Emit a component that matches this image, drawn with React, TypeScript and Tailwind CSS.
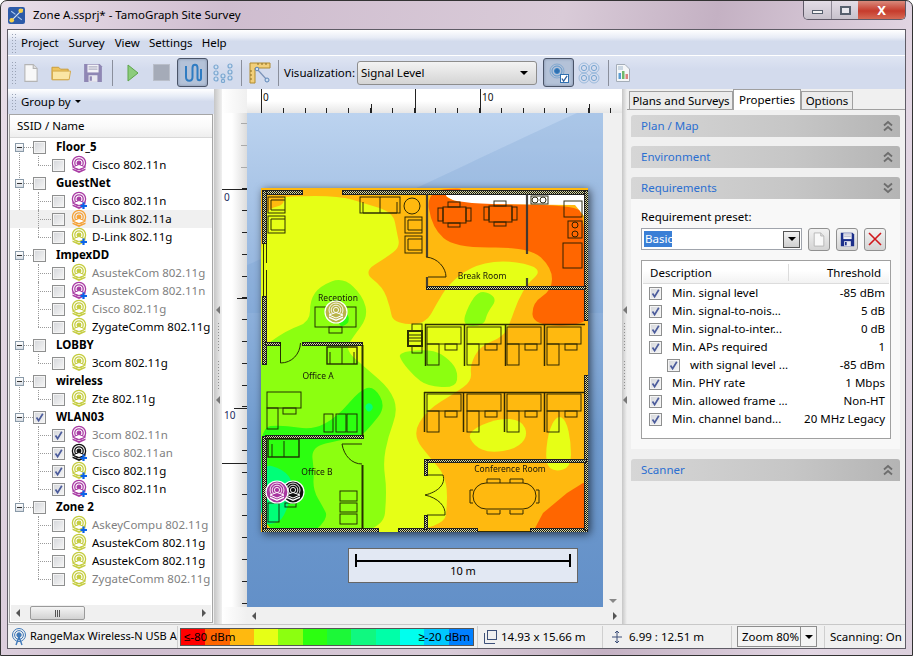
import React from "react";

const UI = "font-['Noto_Sans',sans-serif]";

// smooth closed path through a list of points (midpoint quadratics)
function blob(pts: number[][]) {
  const n = pts.length;
  const mid = (a: number[], b: number[]) => [(a[0] + b[0]) / 2, (a[1] + b[1]) / 2];
  const s = mid(pts[n - 1], pts[0]);
  let d = `M${s[0]} ${s[1]}`;
  for (let i = 0; i < n; i++) {
    const m = mid(pts[i], pts[(i + 1) % n]);
    d += ` Q${pts[i][0]} ${pts[i][1]} ${m[0]} ${m[1]}`;
  }
  return d + "Z";
}

function Box({ checked }: { checked?: boolean }) {
  return (
    <span className="relative block w-[13px] h-[13px] shrink-0 border border-[#8e8f8f] bg-[linear-gradient(135deg,#d4d6da,#f6f6f6)] shadow-[inset_0_0_0_1px_#f4f4f4]">
      {checked && (
        <svg viewBox="0 0 11 11" className="absolute inset-0 w-[11px] h-[11px]">
          <path d="M2.5 5.5 L4.6 8.6 L8.8 1.8" fill="none" stroke="#4c5c9c" strokeWidth="1.7" />
        </svg>
      )}
    </span>
  );
}

function ApIcon({ color, plus }: { color: string; plus?: boolean }) {
  return (
    <svg viewBox="0 0 16 18" className="block w-[16px] h-[18px] shrink-0 overflow-visible">
      <g fill="none" stroke={color} strokeWidth="1.3">
        <circle cx="8" cy="7" r="6.6" />
        <circle cx="8" cy="7" r="4.2" />
        <circle cx="8" cy="7" r="1.8" fill={color} />
      </g>
      <path d="M1.5 11 L8 8.5 L14.5 11 L8 13.5Z" fill="#fff" stroke={color} />
      <path d="M1.5 12.5 L8 15 L14.5 12.5 V14 L8 17 L1.5 14Z" fill={color} />
      {plus && <path d="M12.5 10.5 V17 M9.5 14 H16" stroke="#0b63e8" strokeWidth="2.2" />}
    </svg>
  );
}

type Child = { text: string; color: string; plus?: boolean; dim?: boolean; checked?: boolean; hot?: boolean };
const M = "#a93ba4";
const O = "#f5a136";
const Y = "#c4cc3e";
const K = "#111111";

const tree: { name: string; checked?: boolean; kids: Child[] }[] = [
  { name: "Floor_5", kids: [{ text: "Cisco 802.11n", color: M }] },
  {
    name: "GuestNet",
    kids: [
      { text: "Cisco 802.11n", color: M, plus: true },
      { text: "D-Link 802.11a", color: O, hot: true },
      { text: "D-Link 802.11g", color: Y, plus: true },
    ],
  },
  {
    name: "ImpexDD",
    kids: [
      { text: "AsustekCom 802.11g", color: Y, dim: true },
      { text: "AsustekCom 802.11n", color: M, plus: true, dim: true },
      { text: "Cisco 802.11g", color: Y, dim: true },
      { text: "ZygateComm 802.11g", color: Y },
    ],
  },
  { name: "LOBBY", kids: [{ text: "3com 802.11g", color: Y }] },
  { name: "wireless", kids: [{ text: "Zte 802.11g", color: Y }] },
  {
    name: "WLAN03",
    checked: true,
    kids: [
      { text: "3com 802.11n", color: M, dim: true, checked: true },
      { text: "Cisco 802.11an", color: K, plus: true, dim: true, checked: true },
      { text: "Cisco 802.11g", color: Y, plus: true, checked: true },
      { text: "Cisco 802.11n", color: M, plus: true, checked: true },
    ],
  },
  {
    name: "Zone 2",
    kids: [
      { text: "AskeyCompu 802.11g", color: Y, plus: true, dim: true },
      { text: "AsustekCom 802.11g", color: Y },
      { text: "AsustekCom 802.11g", color: Y },
      { text: "ZygateComm 802.11g", color: Y, dim: true },
    ],
  },
];

function Tree() {
  return (
    <div className="relative flex-1 bg-white overflow-hidden pl-[5px]">
      <span className="absolute left-[9px] top-[9px] h-[361px] border-l border-dotted border-[#9a9a9a]" />
      {tree.map((g) => (
        <div key={g.name}>
          <div className="relative h-[18px] flex items-center">
            <span className="relative z-10 w-[9px] h-[9px] border border-[#8a9aa8] bg-[linear-gradient(#fff,#d8dde4)] flex items-center justify-center">
              <span className="w-[5px] h-px bg-[#333]" />
            </span>
            <span className="w-[9px] border-t border-dotted border-[#9a9a9a]" />
            <Box checked={g.checked} />
            <span className="ml-[10px] text-[11.5px] font-bold text-black">{g.name}</span>
          </div>
          {g.kids.map((c, i) => (
            <div
              key={i}
              className={`relative h-[18px] flex items-center -ml-[5px] pl-[28px] ${c.hot ? "bg-[#f0f0f0]" : ""}`}
            >
              <span className="relative w-[14px] self-stretch shrink-0">
                <span
                  className={`absolute left-0 top-0 border-l border-dotted border-[#9a9a9a] ${
                    i === g.kids.length - 1 ? "h-[9px]" : "h-[18px]"
                  }`}
                />
                <span className="absolute left-0 top-[9px] w-[13px] border-t border-dotted border-[#9a9a9a]" />
              </span>
              <Box checked={c.checked} />
              <span className="ml-[6px]">
                <ApIcon color={c.color} plus={c.plus} />
              </span>
              <span className={`ml-[5px] whitespace-nowrap text-[11.5px] ${c.dim ? "text-[#7f7f7f]" : "text-black"}`}>
                {c.text}
              </span>
            </div>
          ))}
        </div>
      ))}
    </div>
  );
}

function HScroll({ className, thumb }: { className?: string; thumb?: boolean }) {
  return (
    <div className={`h-[16px] flex items-center bg-[#f0f0f0] ${className ?? ""}`}>
      <span className="ml-[5px] w-0 h-0 border-y-[4px] border-y-transparent border-r-[4px] border-r-[#555]" />
      {thumb && (
        <span className="ml-[10px] w-[55px] h-[14px] rounded-[2px] border border-[#9a9a9a] bg-[linear-gradient(#f4f4f4,#d2d2d2)] flex items-center justify-center gap-px">
          <span className="w-px h-[7px] bg-[#555]" />
          <span className="w-px h-[7px] bg-[#555]" />
          <span className="w-px h-[7px] bg-[#555]" />
        </span>
      )}
      <span className="flex-1" />
      <span className="mr-[5px] w-0 h-0 border-y-[4px] border-y-transparent border-l-[4px] border-l-[#555]" />
    </div>
  );
}

function TopRuler() {
  const ticks: [number, number][] = [];
  for (let i = 0; i < 17; i++) ticks.push([14 + 21.8 * i, 5]);
  return (
    <svg viewBox="0 0 375 24" className="block w-[375px] h-[24px] shrink-0">
      <defs>
        <linearGradient id="rt" x1="0" y1="0" x2="0" y2="1">
          <stop offset="0" stopColor="#ffffff" />
          <stop offset="0.5" stopColor="#ffffff" />
          <stop offset="1" stopColor="#e6e6e6" />
        </linearGradient>
      </defs>
      <rect width="375" height="24" fill="url(#rt)" />
      {ticks.map(([x, h], i) => (
        <line key={i} x1={Math.round(x) + 0.5} x2={Math.round(x) + 0.5} y1={24 - h} y2="24" stroke="#222" />
      ))}
      <path d="M14.5 0V24 M233.5 0V24 M168.5 0V24" stroke="#222" />
      <path d="M124.5 15V24 M342.5 15V24" stroke="#222" />
      <text x="16" y="12" fontSize="10" fill="#111" fontFamily="Noto Sans">0</text>
      <text x="235" y="12" fontSize="10" fill="#111" fontFamily="Noto Sans">10</text>
    </svg>
  );
}

function LeftRuler() {
  const ys: number[] = [];
  for (let i = 0; i < 23; i++) ys.push(10 + 21.8 * i);
  return (
    <svg viewBox="0 0 25 494" className="block w-[25px] h-[494px] shrink-0">
      <defs>
        <linearGradient id="rl" x1="0" y1="0" x2="1" y2="0">
          <stop offset="0" stopColor="#ffffff" />
          <stop offset="0.4" stopColor="#ffffff" />
          <stop offset="1" stopColor="#dcdcdc" />
        </linearGradient>
      </defs>
      <rect width="25" height="494" fill="url(#rl)" />
      {ys.map((y, i) => (
        <line
          key={i}
          x1={i < 3 ? 19 : 20}
          x2="25"
          y1={Math.round(y) + 0.5}
          y2={Math.round(y) + 0.5}
          stroke={i < 3 ? "#aaa" : "#222"}
        />
      ))}
      <path d="M0 76.5H25 M0 350.5H25 M15 185.5H25" stroke="#222" />
      <path d="M12 295.5H25" stroke="#222" />
      <text x="2" y="88" fontSize="10" fill="#1a2a60" fontFamily="Noto Sans">0</text>
      <text x="2" y="306" fontSize="10" fill="#1a2a60" fontFamily="Noto Sans">10</text>
    </svg>
  );
}

const YEL = "#e6ff16";
const ORG = "#ffb90f";
const DRK = "#ff6600";
const LIM = "#8cff10";
const GRN = "#2cff10";
const MNT = "#00ff78";

function Sensor({ x, y, color }: { x: number; y: number; color: string }) {
  return (
    <g transform={`translate(${x} ${y})`}>
      <circle r="11" fill={color} stroke="#fff" strokeWidth="1.2" />
      <g fill="none" stroke="#fff" strokeWidth="0.9">
        <circle cy="-2" r="7" />
        <circle cy="-2" r="4.8" />
        <circle cy="-2" r="2.6" />
      </g>
      <path d="M-7 3 L0 0.5 L7 3 L0 6Z" fill={color} stroke="#fff" />
      <path d="M-7 4.5 L0 7.5 L7 4.5 V6 L0 9 L-7 6Z" fill="#fff" />
    </g>
  );
}

function Desk({ x, y }: { x: number; y: number }) {
  return (
    <g>
      <rect x={x} y={y} width="34" height="17" />
      <rect x={x} y={y + 17} width="12" height="21" />
      <rect x={x + 18} y={y + 17} width="12" height="6" />
    </g>
  );
}

function BreakTable({ x, y }: { x: number; y: number }) {
  return (
    <g>
      <rect x={x} y={y} width="23" height="16" />
      <rect x={x + 5} y={y - 5} width="12" height="5" />
      <rect x={x + 5} y={y + 16} width="12" height="4" />
      <rect x={x - 5} y={y + 1} width="5" height="13" />
      <rect x={x + 23} y={y + 1} width="5" height="13" />
    </g>
  );
}

function Chair({ x, y, w, h }: { x: number; y: number; w: number; h: number }) {
  return (
    <g>
      <rect x={x} y={y} width={w} height={h} />
      <path d={`M${x + 3} ${y + h - 3} V${y + 3} H${x + w} M${x + 3} ${y + h - 3} H${x + w}`} />
    </g>
  );
}

function FloorPlan() {
  return (
    <svg
      viewBox="261 188 327 344"
      className="block w-[327px] h-[344px] shrink-0 drop-shadow-[2px_2px_4px_rgba(0,0,0,0.65)]"
      shapeRendering="crispEdges"
    >
      <defs>
        <pattern id="hatch" width="2" height="2" patternUnits="userSpaceOnUse">
          <rect width="2" height="2" fill="#d8d8a0" />
          <rect width="1" height="1" fill="#111" />
          <rect x="1" y="1" width="1" height="1" fill="#111" />
        </pattern>
      </defs>
      <rect x="261" y="188" width="327" height="344" fill={ORG} />
      <g shapeRendering="geometricPrecision">
        <path d="M440 193 H584 V216 L575 205 L460 204Z" fill="#fff" />
        <path
          d={blob([
            [426, 190], [470, 188], [440, 194], [460, 204], [575, 205], [584, 216], [590, 300], [590, 325],
            [533, 326], [532, 303], [552, 290], [552, 268], [530, 247], [455, 248], [432, 228],
          ])}
          fill={DRK}
        />
        <path d="M533 532 L543 513 L567 493 L583 483 L588 483 V532Z" fill={DRK} />
        <path
          d={blob([
            [258, 200], [290, 196], [340, 196], [363, 203], [393, 212], [397, 233], [400, 247], [387, 257],
            [363, 272], [383, 287], [390, 307], [393, 323], [425, 325], [437, 303], [448, 285], [470, 267],
            [500, 260], [533, 265], [540, 273], [528, 283], [518, 300], [510, 323], [503, 337], [480, 346],
            [470, 365], [472, 381], [455, 393], [427, 410], [412, 435], [432, 460], [444, 474], [448, 495],
            [444, 534], [258, 534],
          ])}
          fill={YEL}
        />
        <path d={blob([[262, 194], [284, 194], [284, 205], [270, 208], [264, 216]])} fill={ORG} />
        <path d={blob([[467, 432], [497, 418], [522, 420], [528, 436], [516, 449], [490, 453], [474, 446]])} fill={YEL} />
        <path d={blob([[548, 432], [557, 415], [566, 420], [571, 442], [571, 467], [555, 472], [545, 464]])} fill={YEL} />
        <path
          d={blob([
            [256, 352], [287, 330], [310, 322], [310, 300], [320, 286], [343, 277], [363, 296], [368, 317],
            [353, 337], [345, 350], [367, 369], [390, 389], [398, 410], [388, 437], [383, 463], [387, 490],
            [383, 536], [256, 536],
          ])}
          fill={LIM}
        />
        <path d={blob([[398, 352], [433, 349], [450, 360], [458, 372], [456, 388], [427, 386], [414, 376], [402, 362]])} fill={LIM} />
        <path d={blob([[480, 289], [498, 298], [487, 313], [484, 326], [462, 326], [468, 306]])} fill={LIM} />
        <path d={blob([[338, 317], [347, 312], [350, 322], [340, 328]])} fill={GRN} />
        <path
          d={blob([
            [258, 427], [283, 425], [313, 430], [337, 417], [360, 390], [374, 386], [386, 407], [370, 427],
            [360, 437], [340, 440], [311, 447], [314, 470], [313, 490], [323, 507], [328, 517], [313, 534], [258, 534],
          ])}
          fill={GRN}
        />
        <path d={blob([[260, 463], [283, 469], [294, 483], [288, 507], [280, 523], [260, 525]])} fill={MNT} />
        <path d={blob([[369, 402], [374, 407], [369, 413], [364, 407]])} fill={MNT} />
      </g>

      {/* hatched walls */}
      <g fill="url(#hatch)" stroke="#222" strokeWidth="1">
        <rect x="262" y="190" width="40" height="4" />
        <rect x="342" y="190" width="245" height="4" />
        <rect x="262" y="190" width="4" height="53" />
        <rect x="262" y="296" width="4" height="68" />
        <rect x="262" y="436" width="4" height="95" />
        <rect x="584" y="190" width="4" height="130" />
        <rect x="262" y="528" width="116" height="4" />
        <rect x="398" y="528" width="79" height="4" />
        <rect x="530" y="528" width="58" height="4" />
        <rect x="584" y="375" width="4" height="155" />
        <rect x="265" y="342" width="15" height="3" />
        <rect x="302" y="342" width="60" height="3" />
        <rect x="265" y="435" width="98" height="3" />
        <rect x="426" y="286" width="159" height="3" />
        <rect x="424" y="459" width="162" height="3" />
        <rect x="424" y="459" width="3" height="16" />
        <rect x="424" y="515" width="3" height="14" />
      </g>

      <g fill="none" stroke="#1a1a00" strokeWidth="1" shapeRendering="geometricPrecision" opacity="0.9">
        <path d="M427 194 V257 M427 277 V287 M527 194 V254 M527 278 V287" strokeWidth="2.2" stroke="#333" />
        <path d="M263.5 243 V296 M266.5 243 V263 M266.5 270 V296" />
        <path d="M477 531.5 H530" />
        <path d="M362.5 345 V436 M362.5 465 V529" strokeWidth="2" />
        <path d="M280.5 342 V363 C292 363 300 354 300.5 343" />
        <path d="M342 444 H362 M342 444 C344 456 352 464 362 464" />
        <path d="M426 257 C438 258 446 268 446 277 H428" />
        <path d="M425 324.5 H585 M424 392.5 H585" strokeWidth="1.5" />
        <path d="M425.5 324 V366 M464.5 324 V366 M505.5 324 V366 M544.5 324 V366" strokeWidth="1.5" />
        <path d="M424.5 392 V432 M463.5 392 V432 M504.5 392 V432 M544.5 392 V432" strokeWidth="1.5" />
        <path d="M427 475 H443 C446 484 438 492 425 495 C438 498 446 506 445 515 H427" />

        <Chair x={268} y={197} w={17} h={16} />
        <Chair x={268} y={216} w={17} h={17} />
        <rect x="360" y="197" width="40" height="16" />
        <path d="M380 197 V213 M363 202 V213 H397 V202" />
        <circle cx="412" cy="206" r="8" />
        <Chair x={405} y={217} w={17} h={16} />
        <Chair x={405} y={236} w={17} h={17} />
        <BreakTable x={443} y={207} />
        <BreakTable x={489} y={206} />
        <circle cx="535" cy="200" r="3" />
        <circle cx="543" cy="200" r="3" />
        <rect x="531" y="196" width="17" height="8" />
        <rect x="564" y="201" width="18" height="16" />
        <rect x="568" y="221" width="14" height="17" />
        <circle cx="575" cy="225" r="3" />
        <circle cx="575" cy="234" r="3" />
        <rect x="563" y="243" width="19" height="25" />
        <rect x="412" y="324" width="10" height="7" />
        <rect x="408" y="331" width="14" height="15" strokeWidth="2" />
        <path d="M409 335 H421 M409 338 H421 M409 341 H421" />
        <rect x="412" y="346" width="10" height="7" />
        <Desk x={427} y={327} />
        <Desk x={467} y={327} />
        <Desk x={507} y={327} />
        <Desk x={547} y={327} />
        <Desk x={427} y={394} />
        <Desk x={467} y={394} />
        <Desk x={507} y={394} />
        <Desk x={547} y={394} />
        <rect x="473" y="483" width="63" height="26" rx="13" />
        <path d="M487 483 V479 H500 V483 M510 483 V479 H523 V483 M487 510 V514 H500 V510 M510 510 V514 H523 V510" />
        <path d="M473 490 H470 V503 H473 M536 490 H539 V503 H536" />
        <rect x="327" y="347" width="30" height="17" strokeWidth="1.4" />
        <path d="M342 347 V364 M330 352 V364 M354 352 V364" />
        <rect x="267" y="392" width="34" height="16" />
        <rect x="267" y="408" width="11" height="21" />
        <rect x="283" y="408" width="13" height="6" />
        <rect x="324" y="414" width="9" height="18" />
        <rect x="336" y="414" width="10" height="18" />
        <rect x="347" y="414" width="10" height="18" />
        <rect x="268" y="439" width="31" height="18" strokeWidth="1.4" />
        <path d="M284 441 V457 M272 444 V457" />
        <rect x="340" y="491" width="17" height="10" />
        <rect x="340" y="503" width="17" height="9" />
        <rect x="340" y="514" width="17" height="10" />
        <rect x="268" y="503" width="11" height="19" />
        <rect x="285" y="503" width="11" height="4" />
        <rect x="315" y="307" width="41" height="20" />
        <rect x="329" y="327" width="13" height="6" />
      </g>

      <g fontSize="8.5" fill="#15150a" fontFamily="Noto Sans" textAnchor="middle">
        <text x="338" y="301">Reception</text>
        <text x="482" y="279">Break Room</text>
        <text x="318" y="379">Office A</text>
        <text x="317" y="475">Office B</text>
        <text x="510" y="472">Conference Room</text>
      </g>
      <g shapeRendering="geometricPrecision">
        <Sensor x={336} y={312} color="#b9b44a" />
        <Sensor x={293} y={492} color="#111" />
        <Sensor x={277} y={492} color="#a8369f" />
      </g>
    </svg>
  );
}

function DocIcon({ className }: { className?: string }) {
  return (
    <svg viewBox="0 0 16 18" className={className ?? "w-[16px] h-[18px]"}>
      <path d="M2.5 1.5 H10 L13.5 5 V16.5 H2.5Z" fill="#f8f8f8" stroke="#b4b4b4" />
      <path d="M10 1.5 V5 H13.5" fill="#e0e0e0" stroke="#b4b4b4" />
    </svg>
  );
}

function SaveIcon({ color, className }: { color: string; className?: string }) {
  return (
    <svg viewBox="0 0 18 18" className={className ?? "block w-[20px] h-[20px]"}>
      <path d="M1 1 H15 L17 3 V17 H1Z" fill={color} />
      <rect x="4" y="1.5" width="10" height="7" fill="#f2f2f6" />
      <path d="M5 3.5 H13 M5 5.5 H13" stroke="#b0b0c4" />
      <rect x="5" y="11" width="8" height="6" fill="#e8e8f0" />
      <rect x="6" y="12" width="2" height="4" fill={color} />
    </svg>
  );
}

function Sep() {
  return <span className="block w-px h-[26px] bg-[#8a8f9c] shrink-0" />;
}

function DotsIcon() {
  return (
    <svg viewBox="0 0 22 20" className="block w-[22px] h-[20px]" fill="#cfe0f2" stroke="#7ba7d0" strokeWidth="1.2">
      <circle cx="4" cy="4" r="2" />
      <circle cx="4" cy="10" r="2" />
      <circle cx="4" cy="16" r="2" />
      <circle cx="11" cy="13" r="2" />
      <circle cx="11" cy="18" r="1.6" />
      <circle cx="18" cy="3" r="2" />
      <circle cx="18" cy="9" r="2" />
      <circle cx="18" cy="15" r="2" />
    </svg>
  );
}

function Toolbar() {
  return (
    <div className="h-[34px] shrink-0 flex items-center bg-[linear-gradient(#dfe5f3,#d3dbed_40%,#d3dbed)] border-t border-white pl-[3px]">
      <span className="w-[5px] h-[24px] mr-[6px] bg-[radial-gradient(#9aa3b5_1px,transparent_1px)] bg-[length:3px_3px]" />
      <DocIcon className="w-[18px] h-[20px]" />
      <span className="ml-[11px]">
        <svg viewBox="0 0 22 18" className="w-[21px] h-[18px] block">
          <path d="M1 3 H8 L10 5 H18 V16 H1Z" fill="#eec35d" stroke="#c99a35" />
          <path d="M1.5 7 H20.5 L19 16 H1.5Z" fill="#fbe6a4" stroke="#d3a848" />
        </svg>
      </span>
      <span className="ml-[11px]">
        <SaveIcon color="#8f87b4" />
      </span>
      <span className="ml-[9px]">
        <Sep />
      </span>
      <span className="ml-[14px]">
        <svg viewBox="0 0 12 18" className="w-[12px] h-[18px] block">
          <path d="M1 1 L11 9 L1 17Z" fill="#8ccc7c" stroke="#5da54a" />
        </svg>
      </span>
      <span className="ml-[14px] w-[17px] h-[17px] bg-[#a5abb8] border border-[#b9bec9]" />
      <span className="ml-[7px] w-[31px] h-[29px] rounded-[3px] border border-[#4a5468] bg-[#b4c2d8] flex items-center justify-center shadow-[inset_0_0_3px_#7f8da6]">
        <svg viewBox="0 0 20 20" className="w-[20px] h-[20px]" fill="none" stroke="#2f7cc2" strokeWidth="2">
          <path d="M3 3 V14 C3 19 9.5 19 9.5 14 V5 C9.5 0.5 14.5 0.5 14.5 5 V15 C14.5 18 18 18 18 15 V6" />
        </svg>
      </span>
      <span className="ml-[4px]">
        <DotsIcon />
      </span>
      <span className="ml-[7px]">
        <Sep />
      </span>
      <span className="ml-[7px]">
        <svg viewBox="0 0 22 22" className="w-[22px] h-[22px] block">
          <path d="M1 1 H21 V6 H6 V21 H1Z" fill="#f2cf7a" stroke="#b08a2f" />
          <path d="M9 1 V3 M13 1 V3 M17 1 V3 M1 9 H3 M1 13 H3 M1 17 H3" stroke="#8a6c22" />
          <path d="M8 7 L18 18" stroke="#7c93b8" strokeWidth="1.2" />
          <circle cx="8" cy="7" r="1.8" fill="#cfe0f2" stroke="#5d86b8" />
          <circle cx="18" cy="18" r="2" fill="#cfe0f2" stroke="#5d86b8" />
        </svg>
      </span>
      <span className="ml-[7px]">
        <Sep />
      </span>
      <span className="ml-[5px] w-[68px] text-[11.5px] text-black whitespace-nowrap">Visualization:</span>
      <span className="ml-[5px] w-[180px] h-[24px] rounded-[3px] border border-[#8d8d8d] bg-[linear-gradient(#f3f3f3,#e4e4e4_50%,#d4d4d4)] flex items-center justify-between pl-[3px] pr-[8px] text-[11.5px]">
        Signal Level
        <span className="w-0 h-0 border-x-[4px] border-x-transparent border-t-[4px] border-t-black" />
      </span>
      <span className="ml-[6px] w-[31px] h-[29px] rounded-[3px] border border-[#4a5468] bg-[#b4c2d8] relative flex items-center justify-center shadow-[inset_0_0_3px_#7f8da6]">
        <svg viewBox="0 0 16 16" className="w-[16px] h-[16px] -mt-[3px] -ml-[3px]" fill="none" stroke="#3b84c4">
          <circle cx="8" cy="8" r="7" opacity="0.4" />
          <circle cx="8" cy="8" r="5" opacity="0.7" />
          <circle cx="8" cy="8" r="2.5" fill="#2f6fb0" />
        </svg>
        <span className="absolute right-[4px] bottom-[3px] w-[9px] h-[9px] bg-white border border-[#2f6fb0] flex items-center justify-center">
          <svg viewBox="0 0 8 8" className="w-[7px] h-[7px]">
            <path d="M1 4 L3 7 L7 1" fill="none" stroke="#2f5f9c" strokeWidth="1.5" />
          </svg>
        </span>
      </span>
      <span className="ml-[4px]">
        <svg viewBox="0 0 22 22" className="w-[22px] h-[22px] block" fill="none" stroke="#7aa7d2">
          {[6, 16].map((x) =>
            [6, 16].map((y) => (
              <g key={`${x}-${y}`}>
                <circle cx={x} cy={y} r="5" opacity="0.6" />
                <circle cx={x} cy={y} r="2.6" />
              </g>
            )),
          )}
        </svg>
      </span>
      <span className="ml-[8px]">
        <Sep />
      </span>
      <span className="ml-[6px]">
        <svg viewBox="0 0 16 20" className="w-[16px] h-[20px] block">
          <path d="M1.5 1.5 H10 L14.5 6 V18.5 H1.5Z" fill="#f4f6f8" stroke="#a4adb8" />
          <rect x="3.5" y="10" width="2.5" height="6" fill="#5a9cd2" />
          <rect x="7" y="8" width="2.5" height="8" fill="#6fb86a" />
          <rect x="10.5" y="11" width="2.5" height="5" fill="#d9847e" />
          <path d="M3 4 H8 M3 6 H8" stroke="#9fb6cc" />
        </svg>
      </span>
    </div>
  );
}

function Chev({ down }: { down?: boolean }) {
  return (
    <svg viewBox="0 0 10 12" className="w-[10px] h-[12px]" fill="none" stroke="#6e6e6e" strokeWidth="1.8">
      {down ? <path d="M1 1.5 L5 5 L9 1.5 M1 6.5 L5 10 L9 6.5" /> : <path d="M1 5.5 L5 2 L9 5.5 M1 10.5 L5 7 L9 10.5" />}
    </svg>
  );
}

function SectionHead({ title, down }: { title: string; down?: boolean }) {
  return (
    <div className="h-[22px] flex items-center justify-between pl-[10px] pr-[7px] rounded-t-[3px] bg-[linear-gradient(90deg,#d6d6d6,#c6c6c6_60%,#b4b4b4)]">
      <span className="text-[11.5px] text-[#2b6fd1]">{title}</span>
      <Chev down={down} />
    </div>
  );
}

const reqs: { label: string; value: string; sub?: boolean }[] = [
  { label: "Min. signal level", value: "-85 dBm" },
  { label: "Min. signal-to-nois...", value: "5 dB" },
  { label: "Min. signal-to-inter...", value: "0 dB" },
  { label: "Min. APs required", value: "1" },
  { label: "with signal level ...", value: "-85 dBm", sub: true },
  { label: "Min. PHY rate", value: "1 Mbps" },
  { label: "Min. allowed frame ...", value: "Non-HT" },
  { label: "Min. channel band...", value: "20 MHz Legacy" },
];

function RightPanel() {
  return (
    <div className="flex-1 flex flex-col bg-[#f0f0f0] min-w-0">
      <div className="h-[21px] flex items-end pl-[2px] border-b border-[#a0a0a0] text-[11.5px]">
        <span className="h-[18px] w-[104px] border border-b-0 border-[#a0a0a0] bg-[#ececec] flex items-center justify-center">
          Plans and Surveys
        </span>
        <span className="h-[21px] w-[68px] -mb-px border border-b-0 border-[#a0a0a0] bg-white flex items-center justify-center">
          Properties
        </span>
        <span className="h-[18px] w-[52px] border border-b-0 border-[#a0a0a0] bg-[#ececec] flex items-center justify-center">
          Options
        </span>
      </div>
      <div className="pl-[4px] pr-[5px] pt-[5px] flex flex-col">
        <SectionHead title="Plan / Map" />
        <div className="h-[9px]" />
        <SectionHead title="Environment" />
        <div className="h-[9px]" />
        <SectionHead title="Requirements" down />
        <div className="h-[250px] bg-[#f8f8f8] pl-[10px] pr-[10px] pt-[10px]">
          <div className="text-[11.5px] leading-[16px] text-black">Requirement preset:</div>
          <div className="mt-[2px] flex items-center h-[24px]">
            <span className="w-[161px] h-[22px] border border-[#a0a4ac] bg-white flex items-center pl-[2px] pr-[1px] justify-between">
              <span className="bg-[#3a7fd6] text-white text-[11.5px] leading-[16px] px-px w-[28px]">Basic</span>
              <span className="w-[17px] h-[17px] border border-[#555] bg-[linear-gradient(#f2f2f2,#cfcfcf)] flex items-center justify-center">
                <span className="w-0 h-0 border-x-[4px] border-x-transparent border-t-[4px] border-t-black" />
              </span>
            </span>
            {[0, 1, 2].map((i) => (
              <span
                key={i}
                className="ml-[6px] w-[22px] h-[23px] rounded-[3px] border border-[#909090] bg-[linear-gradient(#f2f2f2,#d4d4d4)] flex items-center justify-center"
              >
                {i === 0 && <DocIcon className="w-[14px] h-[17px]" />}
                {i === 1 && <SaveIcon color="#1c2f8a" className="w-[15px] h-[15px]" />}
                {i === 2 && (
                  <svg viewBox="0 0 14 14" className="w-[14px] h-[14px]">
                    <path d="M1 1 L13 13 M13 1 L1 13" stroke="#d0181c" strokeWidth="1.6" />
                  </svg>
                )}
              </span>
            ))}
          </div>
          <div className="mt-[9px] w-[250px] h-[179px] border border-[#a0a0a0] bg-white px-px pt-px">
            <div className="h-[22px] flex items-center text-[11.5px] bg-[linear-gradient(#fff,#fff_40%,#f2f2f2)] border-b border-[#dcdcdc]">
              <span className="w-[146px] pl-[7px] border-r border-[#dcdcdc]">Description</span>
              <span className="flex-1 text-right pr-[8px]">Threshold</span>
            </div>
            <div>
              {reqs.map((r) => (
                <div key={r.label} className="h-[18px] flex items-center text-[11.5px] pl-[6px] pr-[4px]">
                  <span className={r.sub ? "ml-[18px]" : ""}>
                    <Box checked />
                  </span>
                  <span className="ml-[10px] whitespace-nowrap">{r.label}</span>
                  <span className="flex-1 text-right whitespace-nowrap">{r.value}</span>
                </div>
              ))}
            </div>
          </div>
        </div>
        <div className="h-[10px]" />
        <SectionHead title="Scanner" />
      </div>
    </div>
  );
}

const legend = [
  "#ff0000", "#ff6600", "#ffb90f", "#e6ff16", "#8cff10", "#2cff10",
  "#1cf838", "#10f880", "#00ffa8", "#00ffee", "#00c8ff", "#0080ff",
];

function StatusBar() {
  return (
    <div className="h-[24px] shrink-0 flex items-center bg-[#f0f0f0] border-t border-[#c8c8c8] text-[11.5px] text-black whitespace-nowrap relative">
      <span className="ml-[3px]">
        <svg viewBox="0 0 16 18" className="w-[16px] h-[18px] block" fill="none" stroke="#3e78b8">
          <circle cx="8" cy="7" r="6.5" />
          <circle cx="8" cy="7" r="4.4" />
          <circle cx="8" cy="7" r="2.2" fill="#3e78b8" />
          <path d="M8 9 L5 17 M8 9 L11 17" strokeWidth="1.4" />
        </svg>
      </span>
      <span className="ml-[3px] w-[146px] text-[11px]">RangeMax Wireless-N USB A</span>
      <span className="w-px h-[22px] bg-[#cfcfcf] ml-px" />
      <span className="relative ml-[2px] w-[294px] h-[18px] flex border border-[#555]">
        {legend.map((c) => (
          <span key={c} className="flex-1" style={{ background: c }} />
        ))}
        <span className="absolute left-[3px] top-0 leading-[16px]">≤-80 dBm</span>
        <span className="absolute right-[3px] top-0 leading-[16px]">≥-20 dBm</span>
      </span>
      <span className="w-px h-[22px] bg-[#cfcfcf] ml-[3px]" />
      <span className="ml-[6px]">
        <svg viewBox="0 0 14 14" className="w-[14px] h-[14px] block" fill="none" stroke="#3c4f78">
          <rect x="3.5" y="0.5" width="9" height="9" />
          <path d="M0.5 3 V13.5 H11" />
        </svg>
      </span>
      <span className="ml-[3px] w-[101px]">14.93 x 15.66 m</span>
      <span className="w-px h-[22px] bg-[#cfcfcf]" />
      <span className="ml-[7px]">
        <svg viewBox="0 0 14 14" className="w-[14px] h-[14px] block" fill="none" stroke="#3c4f78">
          <path d="M7 1 V13 M2 7 H12 M5 3 L7 1 L9 3 M5 11 L7 13 L9 11" />
        </svg>
      </span>
      <span className="ml-[5px] w-[102px]">6.99 : 12.51 m</span>
      <span className="w-px h-[22px] bg-[#cfcfcf]" />
      <span className="ml-[5px] w-[80px] h-[21px] border border-[#8d8d8d] flex items-center bg-[#f4f4f4]">
        <span className="flex-1 pl-[4px]">Zoom 80%</span>
        <span className="w-[16px] h-full border-l border-[#8d8d8d] flex items-center justify-center">
          <span className="w-0 h-0 border-x-[4px] border-x-transparent border-t-[4px] border-t-black" />
        </span>
      </span>
      <span className="w-px h-[22px] bg-[#cfcfcf] ml-[7px]" />
      <span className="ml-[5px] w-[74px]">Scanning: On</span>
    </div>
  );
}

function Grip() {
  return <span className="block w-[3px] h-[30px] bg-[radial-gradient(#8f8f8f_0.6px,transparent_0.8px)] bg-[length:3px_3px]" />;
}

function Splitter({ className }: { className?: string }) {
  return (
    <div className={`shrink-0 flex flex-col items-center bg-[linear-gradient(90deg,#c6c6c6,#f0f0f0)] ${className ?? ""}`}>
      <span className="mt-[217px] w-0 h-0 border-y-[4px] border-y-transparent border-r-[4px] border-r-[#777]" />
      <span className="mt-[8px]">
        <Grip />
      </span>
      <span className="mt-[8px]">
        <Grip />
      </span>
      <span className="mt-[6px] w-0 h-0 border-y-[4px] border-y-transparent border-r-[4px] border-r-[#777]" />
    </div>
  );
}

export default function App() {
  return (
    <div className={`${UI} relative w-[913px] h-[656px] overflow-hidden flex flex-col rounded-t-[7px] border border-[#333] bg-[linear-gradient(100deg,#e9e0ea,#cfbdcf_22%,#d9cbd8_55%,#c4b1c3_70%,#e2d6e3_90%,#dcd0dd)]`}>
      <div className="h-[28px] flex items-center shrink-0 pl-[7px] relative">
        <svg viewBox="0 0 16 16" className="w-[17px] h-[17px]">
          <rect width="16" height="16" rx="2" fill="#2c5aa8" />
          <path d="M2 14 L14 2" stroke="#d8e6f6" strokeWidth="1.2" />
          <circle cx="12" cy="3.5" r="2.2" fill="#f6d04a" />
          <circle cx="3.5" cy="12.5" r="2.2" fill="#f6d04a" />
          <path d="M3 4 L7 7 M13 12 L9 9" stroke="#a9c8ee" />
        </svg>
        <span className="ml-[8px] text-[11.5px] text-black">Zone A.ssprj* - TamoGraph Site Survey</span>
        <div className="absolute right-[6px] top-0 h-[19px] flex rounded-b-[5px] overflow-hidden border border-t-0 border-[#5f5a68]">
          <span className="w-[28px] flex items-center justify-center bg-[linear-gradient(#e3dde6,#c7c2cc)] border-r border-[#8f8a96]">
            <span className="mt-[4px] w-[11px] h-[4px] bg-[#f4f4f4] border border-[#56606e]" />
          </span>
          <span className="w-[26px] flex items-center justify-center bg-[linear-gradient(#e3dde6,#c7c2cc)]">
            <span className="w-[11px] h-[9px] border-2 border-[#56606e] bg-[#e8e8ee]" />
          </span>
          <span className="w-[47px] flex items-center justify-center bg-[linear-gradient(#d98a7c,#c63b2c_55%,#d56a55)] text-white font-bold text-[13px] leading-none">
            X
          </span>
        </div>
      </div>

      <div className="h-[620px] shrink-0 mx-[6px] border border-[#5f5c66] bg-[#f0f0f0] flex flex-col">
        <div className="h-[25px] shrink-0 flex items-center bg-[linear-gradient(#ffffff,#e8ecf6_30%,#d3dbed_45%,#d3dbed)] text-[11.5px] text-black">
          <span className="w-[5px] h-[20px] ml-[3px] bg-[radial-gradient(#9aa3b5_1px,transparent_1px)] bg-[length:3px_3px]" />
          <span className="ml-[5px]">Project</span>
          <span className="ml-[10px]">Survey</span>
          <span className="ml-[10px]">View</span>
          <span className="ml-[9px]">Settings</span>
          <span className="ml-[9px]">Help</span>
        </div>
        <Toolbar />
        <div className="flex-1 flex min-h-0">
          {/* left panel */}
          <div className="w-[206px] shrink-0 flex flex-col">
            <div className="h-[25px] shrink-0 flex items-center bg-[linear-gradient(#ffffff,#e6ebf6_30%,#d3dbed_50%,#d3dbed)] text-[11.5px]">
              <span className="w-[5px] h-[18px] ml-[3px] bg-[radial-gradient(#9aa3b5_1px,transparent_1px)] bg-[length:3px_3px]" />
              <span className="ml-[5px]">Group by</span>
              <span className="ml-[4px] w-0 h-0 border-x-[3px] border-x-transparent border-t-[3px] border-t-black" />
            </div>
            <div className="flex-1 mx-px mb-[1px] border border-[#a5a5a5] flex flex-col min-h-0 bg-white">
              <div className="h-[23px] shrink-0 flex items-center pl-[7px] text-[11.5px] bg-[linear-gradient(#fff,#fafafa_50%,#eeeeee)] border-b border-[#d8d8d8]">
                SSID / Name
              </div>
              <Tree />
              <HScroll className="mx-px my-[1px]" thumb />
            </div>
          </div>
          <Splitter className="w-[8px]" />
          {/* map */}
          <div className="w-[400px] shrink-0 flex min-h-0">
            <div className="w-[25px] shrink-0 flex flex-col pt-[24px] bg-[linear-gradient(90deg,#fff,#f0f0f0)]">
              <LeftRuler />
            </div>
            <div className="flex-1 flex flex-col min-w-0">
              <TopRuler />
              <div className="h-[494px] flex">
                <div className="relative w-[356px] shrink-0 h-[494px] bg-[linear-gradient(#bcd3ef,#93b4dd_35%,#709bce_65%,#6390c8)] flex flex-col pl-[14px] pt-[75px] overflow-hidden">
                  <svg viewBox="0 0 356 200" className="absolute left-0 top-0 w-[356px] h-[200px]">
                    <path d="M0 152 C100 110 220 50 330 0 H356 V200 H0Z" fill="#6a95cc" opacity="0.2" />
                  </svg>
                  <div className="relative">
                    <FloorPlan />
                  </div>
                  <div className="relative mt-[16px] ml-[87px] w-[230px] h-[35px] bg-[#e2e8f3] border border-[#666] flex flex-col items-center">
                    <div className="mt-[5px] w-[216px] h-[13px] flex items-center border-x-2 border-black">
                      <span className="w-full h-[2px] bg-black" />
                    </div>
                    <span className="-mt-[2px] text-[11px] leading-[12px] text-black">10 m</span>
                  </div>
                </div>
                <div className="w-[19px] shrink-0 bg-[#f0f0f0] flex flex-col items-center justify-end pb-[4px]">
                  <span className="w-0 h-0 border-x-[4px] border-x-transparent border-t-[4px] border-t-[#888]" />
                </div>
              </div>
              <HScroll className="h-[17px]" />
            </div>
          </div>
          <Splitter className="w-[5px]" />
          <RightPanel />
        </div>
        <StatusBar />
      </div>
    </div>
  );
}
